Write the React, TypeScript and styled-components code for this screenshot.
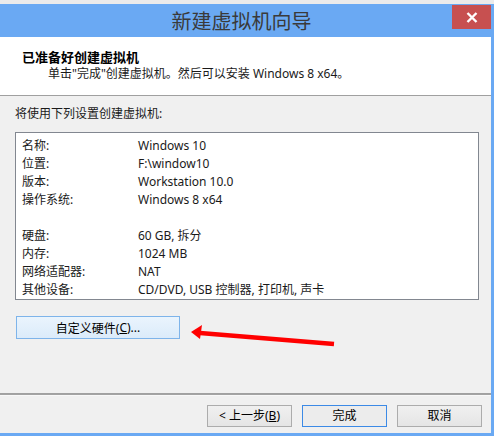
import React from "react";
import styled, { createGlobalStyle } from "styled-components";

const Global = createGlobalStyle`
  html, body { margin: 0; padding: 0; background: #ebebeb; }
  body { font-family: "Noto Sans", "Noto Sans CJK SC", sans-serif; }
`;

const FONT = `"Noto Sans", "Noto Sans CJK SC", sans-serif`;

const Screen = styled.div`
  width: 494px;
  height: 436px;
  display: flex;
  flex-direction: column;
  background: #ebebeb;
  position: relative;
  overflow: hidden;
`;

const Frame = styled.div`
  margin-top: 4px;
  width: 494px;
  height: 432px;
  box-sizing: border-box;
  background: #6aa9f3;
  padding: 0 3px 3px 0;
  display: flex;
  flex-direction: column;
`;

const TitleBar = styled.div`
  height: 33px;
  flex: none;
  display: flex;
  align-items: center;
  justify-content: center;
  position: relative;
  font-family: ${FONT};
  font-size: 20px;
  color: #3a3a3a;
  padding-right: 8px;
`;

const CloseBtn = styled.div`
  position: absolute;
  top: 1px;
  right: 0;
  width: 39px;
  height: 24px;
  background: #c75050;
  display: flex;
  align-items: center;
  justify-content: center;
`;

const Client = styled.div`
  flex: 1;
  display: flex;
  flex-direction: column;
  background: #f0f0f0;
`;

const Header = styled.div`
  height: 59px;
  flex: none;
  background: #ffffff;
  border-bottom: 1px solid #a0a0a0;
  box-sizing: border-box;
  padding: 12px 0 0 22px;
  display: flex;
  flex-direction: column;
  gap: 1px;
  font-family: ${FONT};
`;

const HeaderTitle = styled.div`
  font-size: 13px;
  font-weight: 700;
  line-height: 16px;
  color: #000;
`;

const HeaderSub = styled.div`
  font-size: 12px;
  line-height: 16px;
  color: #1a1a1a;
  padding-left: 26px;
`;

const Body = styled.div`
  flex: 1;
  display: flex;
  flex-direction: column;
  align-items: flex-start;
  padding: 10px 12px 0 15px;
  font-family: ${FONT};
  font-size: 12px;
  color: #1a1a1a;
`;

const Intro = styled.div`
  line-height: 16px;
  height: 16px;
`;

const ListBox = styled.div`
  margin-top: 10px;
  width: 464px;
  height: 168px;
  box-sizing: border-box;
  background: #fff;
  border: 1px solid #828790;
  padding: 4px 0 0 6px;
  display: flex;
  flex-direction: column;
`;

const Row = styled.div`
  height: 18px;
  display: grid;
  grid-template-columns: 116px 1fr;
  align-items: center;
  line-height: 18px;
  white-space: nowrap;
`;

const Cell = styled.span`
  color: #1a1a1a;
`;

const PushButton = styled.button<{ $default?: boolean; $width: number }>`
  width: ${(p) => p.$width}px;
  height: 22px;
  box-sizing: border-box;
  font-family: ${FONT};
  font-size: 12px;
  color: #000;
  padding: 0;
  border: 1px solid ${(p) => (p.$default ? "#3c8ae6" : "#acacac")};
  background: ${(p) => (p.$default ? "#ececec" : "linear-gradient(#f0f0f0, #e5e5e5)")};
  display: flex;
  align-items: center;
  justify-content: center;
  line-height: 16px;
`;

const CustomButton = styled.button`
  margin-top: 16px;
  margin-left: 1px;
  width: 164px;
  height: 23px;
  box-sizing: border-box;
  font-family: ${FONT};
  font-size: 12px;
  color: #000;
  padding: 0;
  border: 1px solid #7eb4ea;
  background: linear-gradient(#eaf4fd, #dbebfa);
  display: flex;
  align-items: center;
  justify-content: center;
`;

const Separator = styled.div`
  flex: none;
  height: 1px;
  background: #a3a3a3;
  border-top: 1px solid #a0a0a0;
  border-bottom: 1px solid #f8f8f8;
`;

const Footer = styled.div`
  height: 37px;
  flex: none;
  display: flex;
  justify-content: flex-end;
  align-items: flex-start;
  padding: 9px 9px 0 0;
  box-sizing: border-box;
  gap: 10px;
`;

const U = styled.span`
  text-decoration: underline;
`;

const Arrow = styled.svg`
  position: absolute;
  left: 0;
  top: 0;
  pointer-events: none;
`;

const top = [
  ["名称:", "Windows 10"],
  ["位置:", "F:\\window10"],
  ["版本:", "Workstation 10.0"],
  ["操作系统:", "Windows 8 x64"],
];
const bottom = [
  ["硬盘:", "60 GB, 拆分"],
  ["内存:", "1024 MB"],
  ["网络适配器:", "NAT"],
  ["其他设备:", "CD/DVD, USB 控制器, 打印机, 声卡"],
];

export default function App() {
  return (
    <Screen>
      <Global />
      <Frame>
        <TitleBar>
          新建虚拟机向导
          <CloseBtn>
            <svg width="12" height="11" viewBox="0 0 12 11">
              <path d="M1.5 1 L10.5 10 M10.5 1 L1.5 10" stroke="#fff" strokeWidth="2.4" />
            </svg>
          </CloseBtn>
        </TitleBar>
        <Client>
          <Header>
            <HeaderTitle>已准备好创建虚拟机</HeaderTitle>
            <HeaderSub>单击"完成"创建虚拟机。然后可以安装 Windows 8 x64。</HeaderSub>
          </Header>
          <Body>
            <Intro>将使用下列设置创建虚拟机:</Intro>
            <ListBox>
              {top.map(([k, v]) => (
                <Row key={k}>
                  <Cell>{k}</Cell>
                  <Cell>{v}</Cell>
                </Row>
              ))}
              <Row />
              {bottom.map(([k, v]) => (
                <Row key={k}>
                  <Cell>{k}</Cell>
                  <Cell>{v}</Cell>
                </Row>
              ))}
            </ListBox>
            <CustomButton>
              自定义硬件(<U>C</U>)...
            </CustomButton>
          </Body>
          <Separator />
          <Footer>
            <PushButton $width={85}>
              &lt; 上一步(<U>B</U>)
            </PushButton>
            <PushButton $width={85} $default>
              完成
            </PushButton>
            <PushButton $width={85}>取消</PushButton>
          </Footer>
        </Client>
      </Frame>
      <Arrow width="494" height="436" viewBox="0 0 494 436">
        <path d="M334 344 L200 333" stroke="#ff0000" strokeWidth="4.5" />
        <path d="M191 332 L202 325 L200 339 Z" fill="#ff0000" />
      </Arrow>
    </Screen>
  );
}
